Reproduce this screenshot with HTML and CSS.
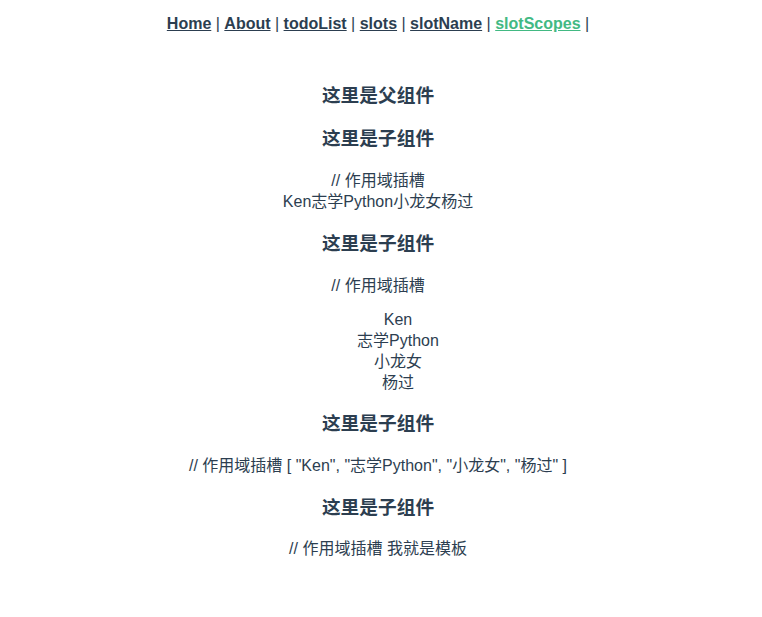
FILE: index.html
```html
<!DOCTYPE html>
<html lang="zh-CN">
<head>
<meta charset="utf-8">
<title>slotScopes</title>
<link rel="stylesheet" href="styles.css">
</head>
<body>
<div id="app">
  <div class="nav">
    <a href="#/">Home</a> |
    <a href="#/about">About</a> |
    <a href="#/todoList">todoList</a> |
    <a href="#/slots">slots</a> |
    <a href="#/slotName">slotName</a> |
    <a href="#/slotScopes" class="active">slotScopes</a> |
  </div>
  <div class="parent">
    <h3>这里是父组件</h3>
    <div class="child">
      <h3>这里是子组件</h3>
      <div>// 作用域插槽</div>
      <div>Ken志学Python小龙女杨过</div>
    </div>
    <div class="child">
      <h3>这里是子组件</h3>
      <div>// 作用域插槽</div>
      <ul class="list">
        <li>Ken</li>
        <li>志学Python</li>
        <li>小龙女</li>
        <li>杨过</li>
      </ul>
    </div>
    <div class="child">
      <h3>这里是子组件</h3>
      <div>// 作用域插槽 [ "Ken", "志学Python", "小龙女", "杨过" ]</div>
    </div>
    <div class="child">
      <h3>这里是子组件</h3>
      <div>// 作用域插槽 我就是模板</div>
    </div>
  </div>
</div>
</body>
</html>
```
FILE: styles.css
```css
html, body {
  margin: 0;
  padding: 0;
  background: #ffffff;
}

#app {
  font-family: "Liberation Sans", Arial, "Noto Sans CJK SC", sans-serif;
  font-size: 16px;
  line-height: 21px;
  color: #2c3e50;
  text-align: center;
  padding: 0 6px 0 0;
}

.nav {
  padding: 15px 30px 31px;
  line-height: 18px;
}

.nav a {
  font-weight: bold;
  color: #2c3e50;
  text-decoration: underline;
}

.nav a.active {
  color: #42b983;
}

h3 {
  font-size: 18.72px;
  line-height: 25px;
  font-weight: bold;
  margin: 18.72px 0;
}

.list {
  list-style: none;
  margin: 13px 0 16px;
  padding-left: 40px;
}
```
